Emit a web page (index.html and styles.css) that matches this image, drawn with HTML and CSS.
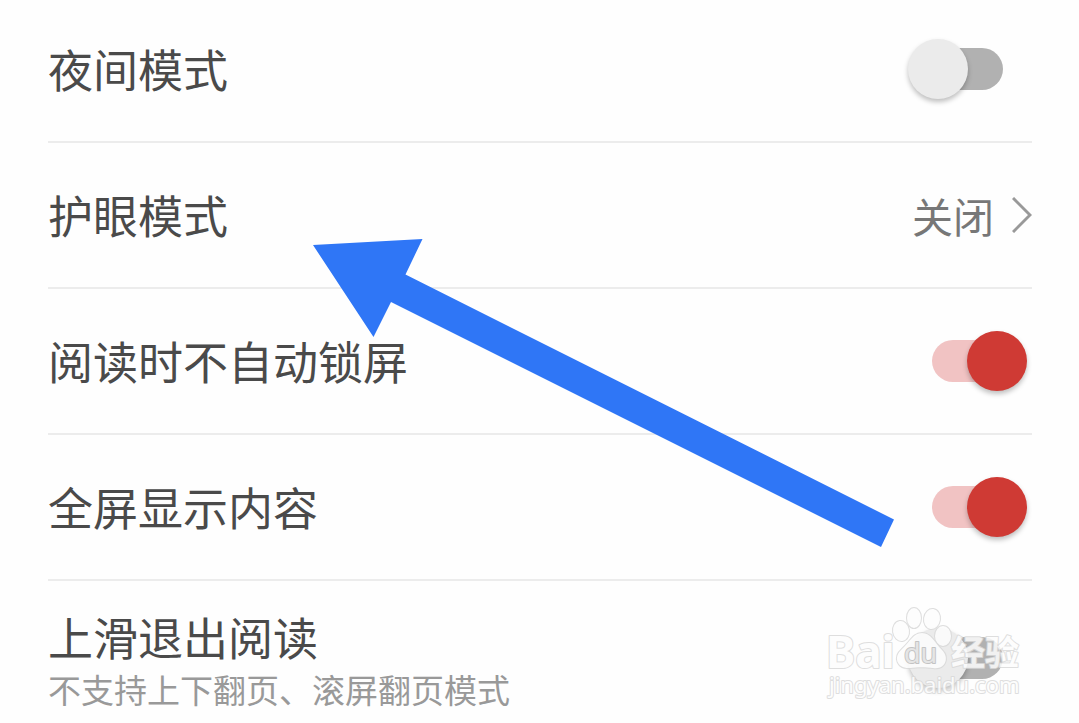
FILE: index.html
```html
<!DOCTYPE html>
<html lang="zh-CN">
<head>
    <meta charset="UTF-8">
    <meta name="viewport" content="width=device-width, initial-scale=1.0">
    <title>阅读设置</title>
    <link rel="stylesheet" href="styles.css">
</head>
<body>
    <main class="settings">
        <div class="row row-first">
            <label class="label" for="night">夜间模式</label>
            <input class="switch" type="checkbox" role="switch" id="night">
        </div>
        <div class="row">
            <span class="label" id="eye-label">护眼模式</span>
            <button class="picker" type="button" aria-describedby="eye-label">
                <span>关闭</span>
                <svg class="chevron" viewBox="0 0 20 36" aria-hidden="true"><path d="M1 1 L18 18 L1 35"/></svg>
            </button>
        </div>
        <div class="row">
            <label class="label" for="awake">阅读时不自动锁屏</label>
            <input class="switch" type="checkbox" role="switch" id="awake" checked>
        </div>
        <div class="row">
            <label class="label" for="fullscreen">全屏显示内容</label>
            <input class="switch" type="checkbox" role="switch" id="fullscreen" checked>
        </div>
        <div class="row row-last">
            <label class="label" for="swipe">上滑退出阅读<small class="hint">不支持上下翻页、滚屏翻页模式</small></label>
            <input class="switch" type="checkbox" role="switch" id="swipe">
        </div>
    </main>

    <svg class="arrow" viewBox="313 239 581 308" aria-hidden="true">
        <path d="M313 245 L422.500 239 L405.500 274.500 L894 519.500 L881 547 L391 302 L373.500 337 Z"/>
    </svg>

    <svg class="watermark" viewBox="0 0 200 104" role="img" aria-label="Baidu 经验">
        <g class="mark">
            <text class="mark-brand" x="1" y="68">Bai</text>
            <ellipse cx="76" cy="31" rx="8" ry="10" transform="rotate(-8 76 31)"/>
            <ellipse cx="89" cy="18" rx="7" ry="10"/>
            <ellipse cx="107" cy="19" rx="8" ry="10" transform="rotate(8 107 19)"/>
            <ellipse cx="118" cy="36" rx="8" ry="10"/>
            <path d="M97 33 C88 33 85 42 77 49 C67 58 73 69 85 68 C92 67 101 67 108 68 C120 70 125 58 117 50 C109 42 106 33 97 33 Z"/>
            <text class="mark-du" x="79" y="63">du</text>
            <text class="mark-cn" x="126" y="65">经验</text>
            <text class="mark-url" x="4" y="93">jingyan.baidu.com</text>
        </g>
    </svg>
</body>
</html>
```
FILE: styles.css
```css
* {
    box-sizing: border-box;
}
body {
    position: relative;
    margin: 0;
    min-height: 100vh;
    overflow: hidden;
    background: #fefefe;
    color: #4a4a4a;
    font-family: "Noto Sans CJK SC", sans-serif;
}
.settings {
    padding: 0 47px 0 48px;
}
.row {
    display: flex;
    align-items: center;
    justify-content: space-between;
    min-height: 146px;
    border-bottom: 2px solid #ececec;
}
.row-first {
    min-height: 143px;
    padding-bottom: 4px;
}
.row-last {
    min-height: 142px;
    padding-top: 12px;
    border-bottom: none;
}
.row-last .label {
    padding-top: 8px;
}
.label {
    font-size: 45px;
    line-height: 54px;
}
.hint {
    display: block;
    color: #999;
    font-size: 33px;
    line-height: 50px;
}
.picker {
    display: flex;
    align-items: center;
    gap: 18px;
    padding: 0;
    border: none;
    background: none;
    color: #777;
    font-family: inherit;
    font-size: 41px;
    line-height: 54px;
    cursor: pointer;
}
.chevron {
    width: 20px;
    height: 36px;
    fill: none;
    stroke: #999;
    stroke-width: 3;
}

/* switch */
.switch {
    appearance: none;
    position: relative;
    display: flex;
    align-items: center;
    justify-content: center;
    flex: none;
    width: 119px;
    height: 60px;
    margin: 0 5px 0 0;
    cursor: pointer;
}
.switch::before {
    content: "";
    width: 71px;
    height: 42px;
    border-radius: 21px;
    background: #b1b1b1;
}
.switch::after {
    content: "";
    position: absolute;
    top: 0;
    left: 0;
    width: 60px;
    height: 60px;
    border-radius: 50%;
    background: #ebebeb;
    box-shadow: 0 3px 5px rgba(0, 0, 0, 0.25);
}
.switch:checked::before {
    background: #f1c3c3;
}
.switch:checked::after {
    left: auto;
    right: 0;
    background: #cf3a34;
}

/* overlays */
.arrow {
    position: absolute;
    top: 239px;
    left: 313px;
    width: 581px;
    height: 308px;
    fill: #2f76f6;
    pointer-events: none;
}
.watermark {
    position: absolute;
    top: 600px;
    left: 825px;
    width: 200px;
    height: 104px;
    pointer-events: none;
}
.mark {
    fill: #fdfdfd;
    stroke: #d9d9d9;
    stroke-width: 2;
    stroke-linejoin: round;
    paint-order: stroke;
    opacity: 0.85;
}
.mark-brand {
    font: bold 44px "Noto Sans", sans-serif;
}
.mark-du {
    font: 27px "Noto Sans", sans-serif;
    fill: #e4e4e4;
    stroke: #bdbdbd;
}
.mark-cn {
    font: bold 34px "Noto Sans CJK SC", sans-serif;
}
.mark-url {
    font: 22px "Noto Sans", sans-serif;
}
```
